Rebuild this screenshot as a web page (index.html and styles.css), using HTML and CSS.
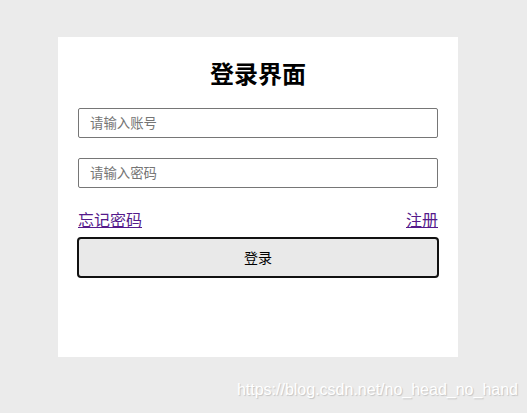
FILE: index.html
```html
<!DOCTYPE html>
<html lang="zh-CN">
<head>
    <meta charset="UTF-8">
    <meta name="viewport" content="width=device-width, initial-scale=1.0">
    <title>登录</title>
    <link rel="stylesheet" href="styles.css">
</head>
<body>
    <div class="login-box">
        <h2>登录界面</h2>
        <form class="login-form" onsubmit="return false">
            <input type="text" class="text-input" placeholder="请输入账号">
            <input type="password" class="text-input" placeholder="请输入密码">
            <div class="links">
                <a href="#">忘记密码</a>
                <a href="#">注册</a>
            </div>
            <button type="submit" class="login-btn">登录</button>
        </form>
    </div>
    <div class="watermark">https://blog.csdn.net/no_head_no_hand</div>
</body>
</html>
```

FILE: styles.css
```css
body {
    margin: 0;
    background-color: #ebebeb;
    font-family: "Noto Sans CJK SC", "Liberation Sans", sans-serif;
    height: 413px;
    overflow: hidden;
}
.login-box {
    width: 400px;
    height: 320px;
    box-sizing: border-box;
    margin: 37px 0 0 58px;
    padding: 20px;
    background-color: #fff;
}
.login-box h2 {
    margin: 0 0 19px;
    font-size: 24px;
    line-height: 32px;
    text-align: center;
    color: #000;
}
.login-form {
    display: flex;
    flex-direction: column;
}
.text-input {
    height: 30px;
    box-sizing: border-box;
    padding: 0 11px 3px;
    border: 1px solid #767676;
    border-radius: 2px;
    font-family: inherit;
    font-size: 13.4px;
    margin-bottom: 20px;
}
.text-input::placeholder {
    color: #757575;
}
.links {
    display: flex;
    justify-content: space-between;
    font-size: 16px;
    line-height: 22px;
    margin-bottom: 7px;
}
.links a {
    color: #551a8b;
}
.login-btn {
    height: 41px;
    margin-left: -1px;
    margin-right: -1px;
    padding-bottom: 3px;
    border: 2px solid #111;
    border-radius: 4px;
    background-color: #e9e9e9;
    font-family: inherit;
    font-size: 14px;
    color: #000;
    cursor: pointer;
}
.watermark {
    position: absolute;
    right: 9px;
    top: 381px;
    font-family: "Liberation Sans", Arial, sans-serif;
    font-size: 16px;
    color: #fff;
    text-shadow: 1px 1px 1px #c4c4c4;
}
```
